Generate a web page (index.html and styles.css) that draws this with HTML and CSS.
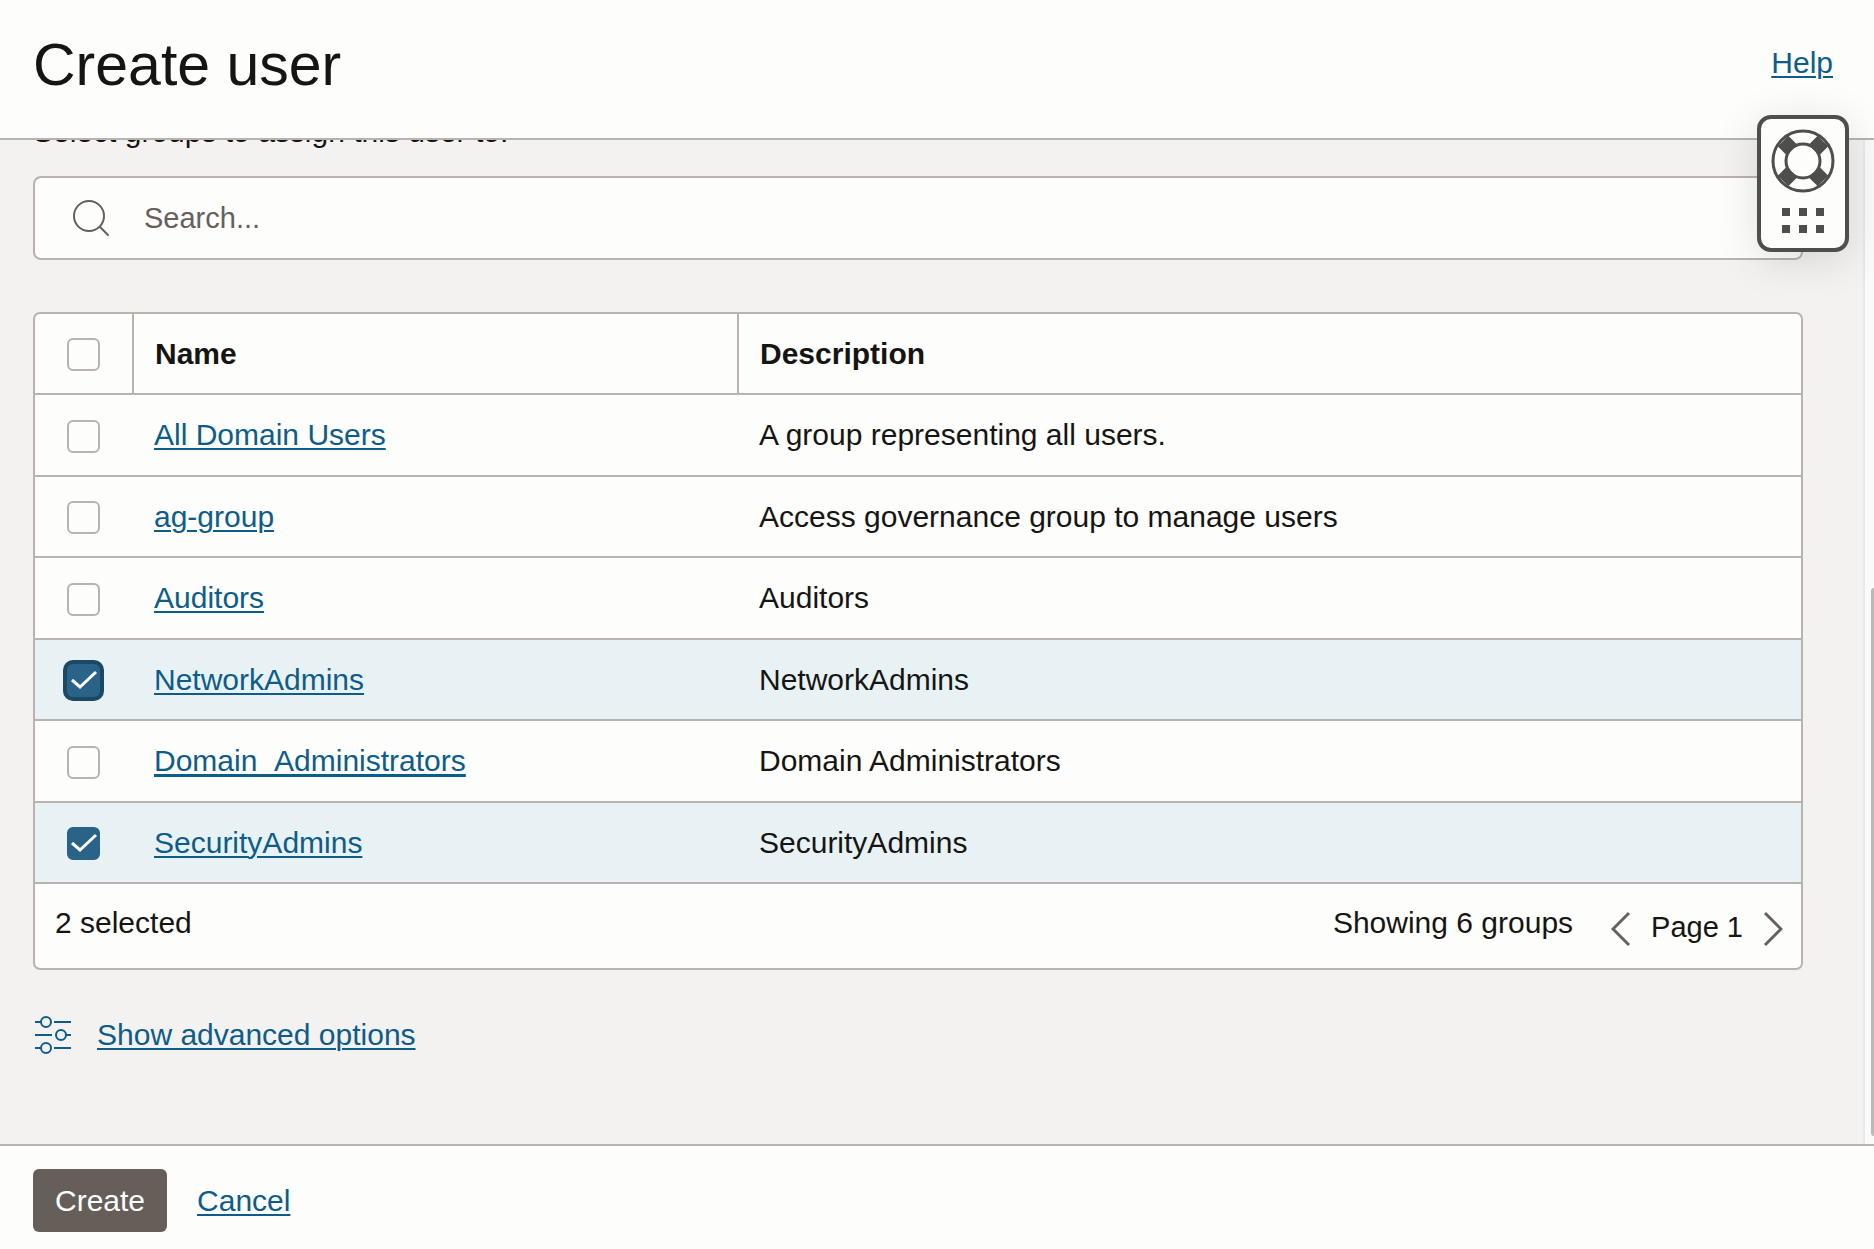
FILE: index.html
```html
<!DOCTYPE html>
<html lang="en">
<head>
<meta charset="utf-8">
<meta name="viewport" content="width=device-width, initial-scale=1">
<title>Create user</title>
<link rel="stylesheet" href="styles.css">
</head>
<body>
<div class="drawer">
  <header class="drawer-header">
    <h1 class="title">Create user</h1>
    <a class="link help-link" href="#help">Help</a>
  </header>

  <div class="drawer-body">
    <main class="content">
      <p class="hint">Select groups to assign this user to.</p>

      <label class="search">
        <svg class="search-icon" viewBox="0 0 38 38" aria-hidden="true">
          <circle cx="17" cy="17" r="15"/>
          <path d="M28 28l8 8"/>
        </svg>
        <input class="search-input" type="search" placeholder="Search..." aria-label="Search groups">
      </label>

      <section class="panel">
        <table class="groups">
          <thead>
            <tr>
              <th class="pick" scope="col"><input class="check" type="checkbox" aria-label="Select all groups"></th>
              <th class="name" scope="col">Name</th>
              <th scope="col">Description</th>
            </tr>
          </thead>
          <tbody>
            <tr>
              <td class="pick"><input class="check" type="checkbox" aria-label="Select All Domain Users"></td>
              <td><a class="link" href="#all-domain-users">All Domain Users</a></td>
              <td>A group representing all users.</td>
            </tr>
            <tr>
              <td class="pick"><input class="check" type="checkbox" aria-label="Select ag-group"></td>
              <td><a class="link" href="#ag-group">ag-group</a></td>
              <td>Access governance group to manage users</td>
            </tr>
            <tr>
              <td class="pick"><input class="check" type="checkbox" aria-label="Select Auditors"></td>
              <td><a class="link" href="#auditors">Auditors</a></td>
              <td>Auditors</td>
            </tr>
            <tr class="selected">
              <td class="pick"><input class="check is-focused" type="checkbox" aria-label="Select NetworkAdmins" checked></td>
              <td><a class="link" href="#network-admins">NetworkAdmins</a></td>
              <td>NetworkAdmins</td>
            </tr>
            <tr>
              <td class="pick"><input class="check" type="checkbox" aria-label="Select Domain_Administrators"></td>
              <td><a class="link link-solid" href="#domain-administrators">Domain_Administrators</a></td>
              <td>Domain Administrators</td>
            </tr>
            <tr class="selected">
              <td class="pick"><input class="check" type="checkbox" aria-label="Select SecurityAdmins" checked></td>
              <td><a class="link" href="#security-admins">SecurityAdmins</a></td>
              <td>SecurityAdmins</td>
            </tr>
          </tbody>
        </table>
        <div class="panel-footer">
          <span class="selected-count">2 selected</span>
          <span>Showing 6 groups</span>
          <nav class="pager" aria-label="Pages">
            <button class="pager-button" type="button" aria-label="Previous page">
              <svg class="chevron" viewBox="0 0 20 36" aria-hidden="true"><path d="M18 2L2 18l16 16"/></svg>
            </button>
            <span class="page-label">Page 1</span>
            <button class="pager-button" type="button" aria-label="Next page">
              <svg class="chevron" viewBox="0 0 20 36" aria-hidden="true"><path d="M2 2l16 16L2 34"/></svg>
            </button>
          </nav>
        </div>
      </section>

      <div class="advanced">
        <svg class="sliders-icon" viewBox="0 0 38 38" aria-hidden="true">
          <path d="M1 6h6M20 6h17M1 19h17M32 19h5M1 32h6M20 32h17"/>
          <circle cx="12" cy="6" r="5"/>
          <circle cx="27" cy="19" r="5"/>
          <circle cx="12" cy="32" r="5"/>
        </svg>
        <a class="link" href="#advanced">Show advanced options</a>
      </div>
    </main>
    <div class="scroll-track" aria-hidden="true"><div class="scroll-thumb"></div></div>
  </div>

  <footer class="drawer-footer">
    <button class="button-primary" type="button">Create</button>
    <a class="link" href="#cancel">Cancel</a>
  </footer>

  <button class="support" type="button" aria-label="Open support">
    <svg class="support-ring" viewBox="0 0 64 64" aria-hidden="true">
      <circle class="ring-line" cx="32" cy="32" r="30"/>
      <circle class="ring-line" cx="32" cy="32" r="17"/>
      <path class="ring-band" d="M43 21l9-9M43 43l9 9M21 43l-9 9M21 21l-9-9"/>
    </svg>
    <svg class="support-grip" viewBox="0 0 42 25" aria-hidden="true">
      <path d="M0 0h8v8H0zM17 0h8v8h-8zM34 0h8v8h-8zM0 17h8v8H0zM17 17h8v8h-8zM34 17h8v8h-8z"/>
    </svg>
  </button>
</div>
</body>
</html>
```
FILE: styles.css
```css
:root {
  --ink: #161513;
  --muted: #665f5b;
  --line: #b9b3af;
  --surface: #fdfdfc;
  --canvas: #f3f2f0;
  --link: #0e5c89;
  --link-fill: #2a6388;
}

* {
  box-sizing: border-box;
}

body {
  margin: 0;
  background: var(--surface);
  color: var(--ink);
  font: 30px/36px "Liberation Sans", Arial, sans-serif;
}

.drawer {
  position: relative;
  display: grid;
  grid-template-rows: auto minmax(0, 1fr) auto;
  height: 100vh;
  overflow: hidden;
}

.link {
  color: var(--link);
  text-decoration: underline 2px;
  text-underline-offset: 3px;
}

/* One unbroken rule that also takes in the underscore. */
.link-solid {
  text-decoration-thickness: 3px;
  text-decoration-skip-ink: none;
}

.drawer-header {
  display: flex;
  justify-content: space-between;
  align-items: flex-start;
  padding: 31px 41px 39px 33px;
  border-bottom: 2px solid var(--line);
}

.title {
  margin: 0;
  font-size: 59px;
  font-weight: 400;
  line-height: 68px;
}

.help-link {
  padding-top: 14px;
}

.drawer-body {
  display: flex;
  overflow: hidden;
  background: var(--canvas);
}

.content {
  flex: 1;
  min-width: 0;
  padding: 0 60px 0 33px;
}

/* The list is scrolled, so the hint sits partly under the header. */
.hint {
  margin: -26px 0 26px;
}

.search {
  display: flex;
  align-items: center;
  gap: 34px;
  height: 84px;
  padding: 0 37px;
  border: 2px solid var(--line);
  border-radius: 8px;
  background: var(--surface);
}

.search-icon {
  width: 38px;
  height: 38px;
  fill: none;
  stroke: var(--muted);
  stroke-width: 2;
  stroke-linecap: round;
}

.search-input {
  flex: 1;
  min-width: 0;
  padding: 0;
  border: 0;
  outline: 0;
  background: none;
  color: var(--ink);
  font: inherit;
  font-size: 29px;
}

.search-input::placeholder {
  color: var(--muted);
  opacity: 1;
}

.panel {
  margin-top: 52px;
  border: 2px solid var(--line);
  border-radius: 7px;
  background: var(--surface);
  overflow: hidden;
}

.groups {
  width: 100%;
  table-layout: fixed;
  border-collapse: separate;
  border-spacing: 0;
}

.groups th,
.groups td {
  height: 81px;
  padding: 0 22px;
  border-bottom: 2px solid var(--line);
  text-align: left;
  vertical-align: middle;
}

.groups tbody tr:nth-child(odd) td {
  height: 82px;
}

.groups th + th {
  padding-left: 21px;
  border-left: 2px solid var(--line);
}

.groups .pick {
  width: 97px;
  padding: 2px 0 0 32px;
}

.groups .name {
  width: 605px;
}

.selected {
  background: #e8f2f5;
}

.check {
  display: block;
  width: 33px;
  height: 33px;
  margin: 0;
  appearance: none;
  border: 2px solid var(--line);
  border-radius: 6px;
  background: var(--surface);
}

.check:checked {
  border-color: var(--link-fill);
  background: var(--link-fill) url("data:image/svg+xml,%3Csvg xmlns='http://www.w3.org/2000/svg' viewBox='0 0 33 33'%3E%3Cpath d='M5 16l8 7L29 8' fill='none' stroke='white' stroke-width='3'/%3E%3C/svg%3E") center / 33px 33px no-repeat;
}

.check.is-focused {
  box-shadow: 0 0 0 4px #1b4862;
}

.panel-footer {
  display: flex;
  align-items: flex-start;
  height: 84px;
  padding: 21px 18px 0 20px;
}

.selected-count {
  flex: 1;
}

.pager {
  display: flex;
  align-items: center;
  gap: 20px;
  margin: 4px 0 0 38px;
}

.pager-button {
  display: block;
  padding: 0;
  border: 0;
  background: none;
}

.chevron {
  display: block;
  width: 20px;
  height: 36px;
  fill: none;
  stroke: var(--muted);
  stroke-width: 3;
}

.page-label {
  padding-bottom: 4px;
  font-size: 29px;
}

.advanced {
  display: flex;
  align-items: center;
  gap: 25px;
  margin-top: 46px;
  padding-left: 1px;
}

.sliders-icon {
  width: 38px;
  height: 38px;
  fill: none;
  stroke: var(--link);
  stroke-width: 2;
}

.scroll-track {
  display: flex;
  flex-direction: column;
  justify-content: flex-end;
  align-items: flex-end;
  width: 11px;
  padding-bottom: 8px;
  border-left: 2px solid #e8e8e8;
  background: #fafafa;
}

.scroll-thumb {
  width: 3px;
  height: 55%;
  border-radius: 3px 0 0 3px;
  background: #b9b9b9;
}

.drawer-footer {
  display: flex;
  align-items: center;
  gap: 30px;
  padding: 23px 33px 17px;
  border-top: 2px solid var(--line);
}

.button-primary {
  height: 63px;
  padding: 0 22px;
  border: 0;
  border-radius: 6px;
  background: #655e59;
  color: #fff;
  font: inherit;
}

.support {
  position: absolute;
  top: 115px;
  right: 25px;
  display: flex;
  flex-direction: column;
  align-items: center;
  gap: 15px;
  width: 92px;
  height: 137px;
  padding: 10px 0 0;
  border: 4px solid #504e4a;
  border-radius: 14px;
  background: var(--surface);
  box-shadow: 0 8px 44px rgba(0, 0, 0, 0.12);
}

.support-ring {
  width: 64px;
  height: 64px;
}

.ring-line {
  fill: none;
  stroke: #504e4a;
  stroke-width: 3;
}

.ring-band {
  stroke: #504e4a;
  stroke-width: 15;
}

.support-grip {
  width: 42px;
  height: 25px;
  fill: #504e4a;
}
```
